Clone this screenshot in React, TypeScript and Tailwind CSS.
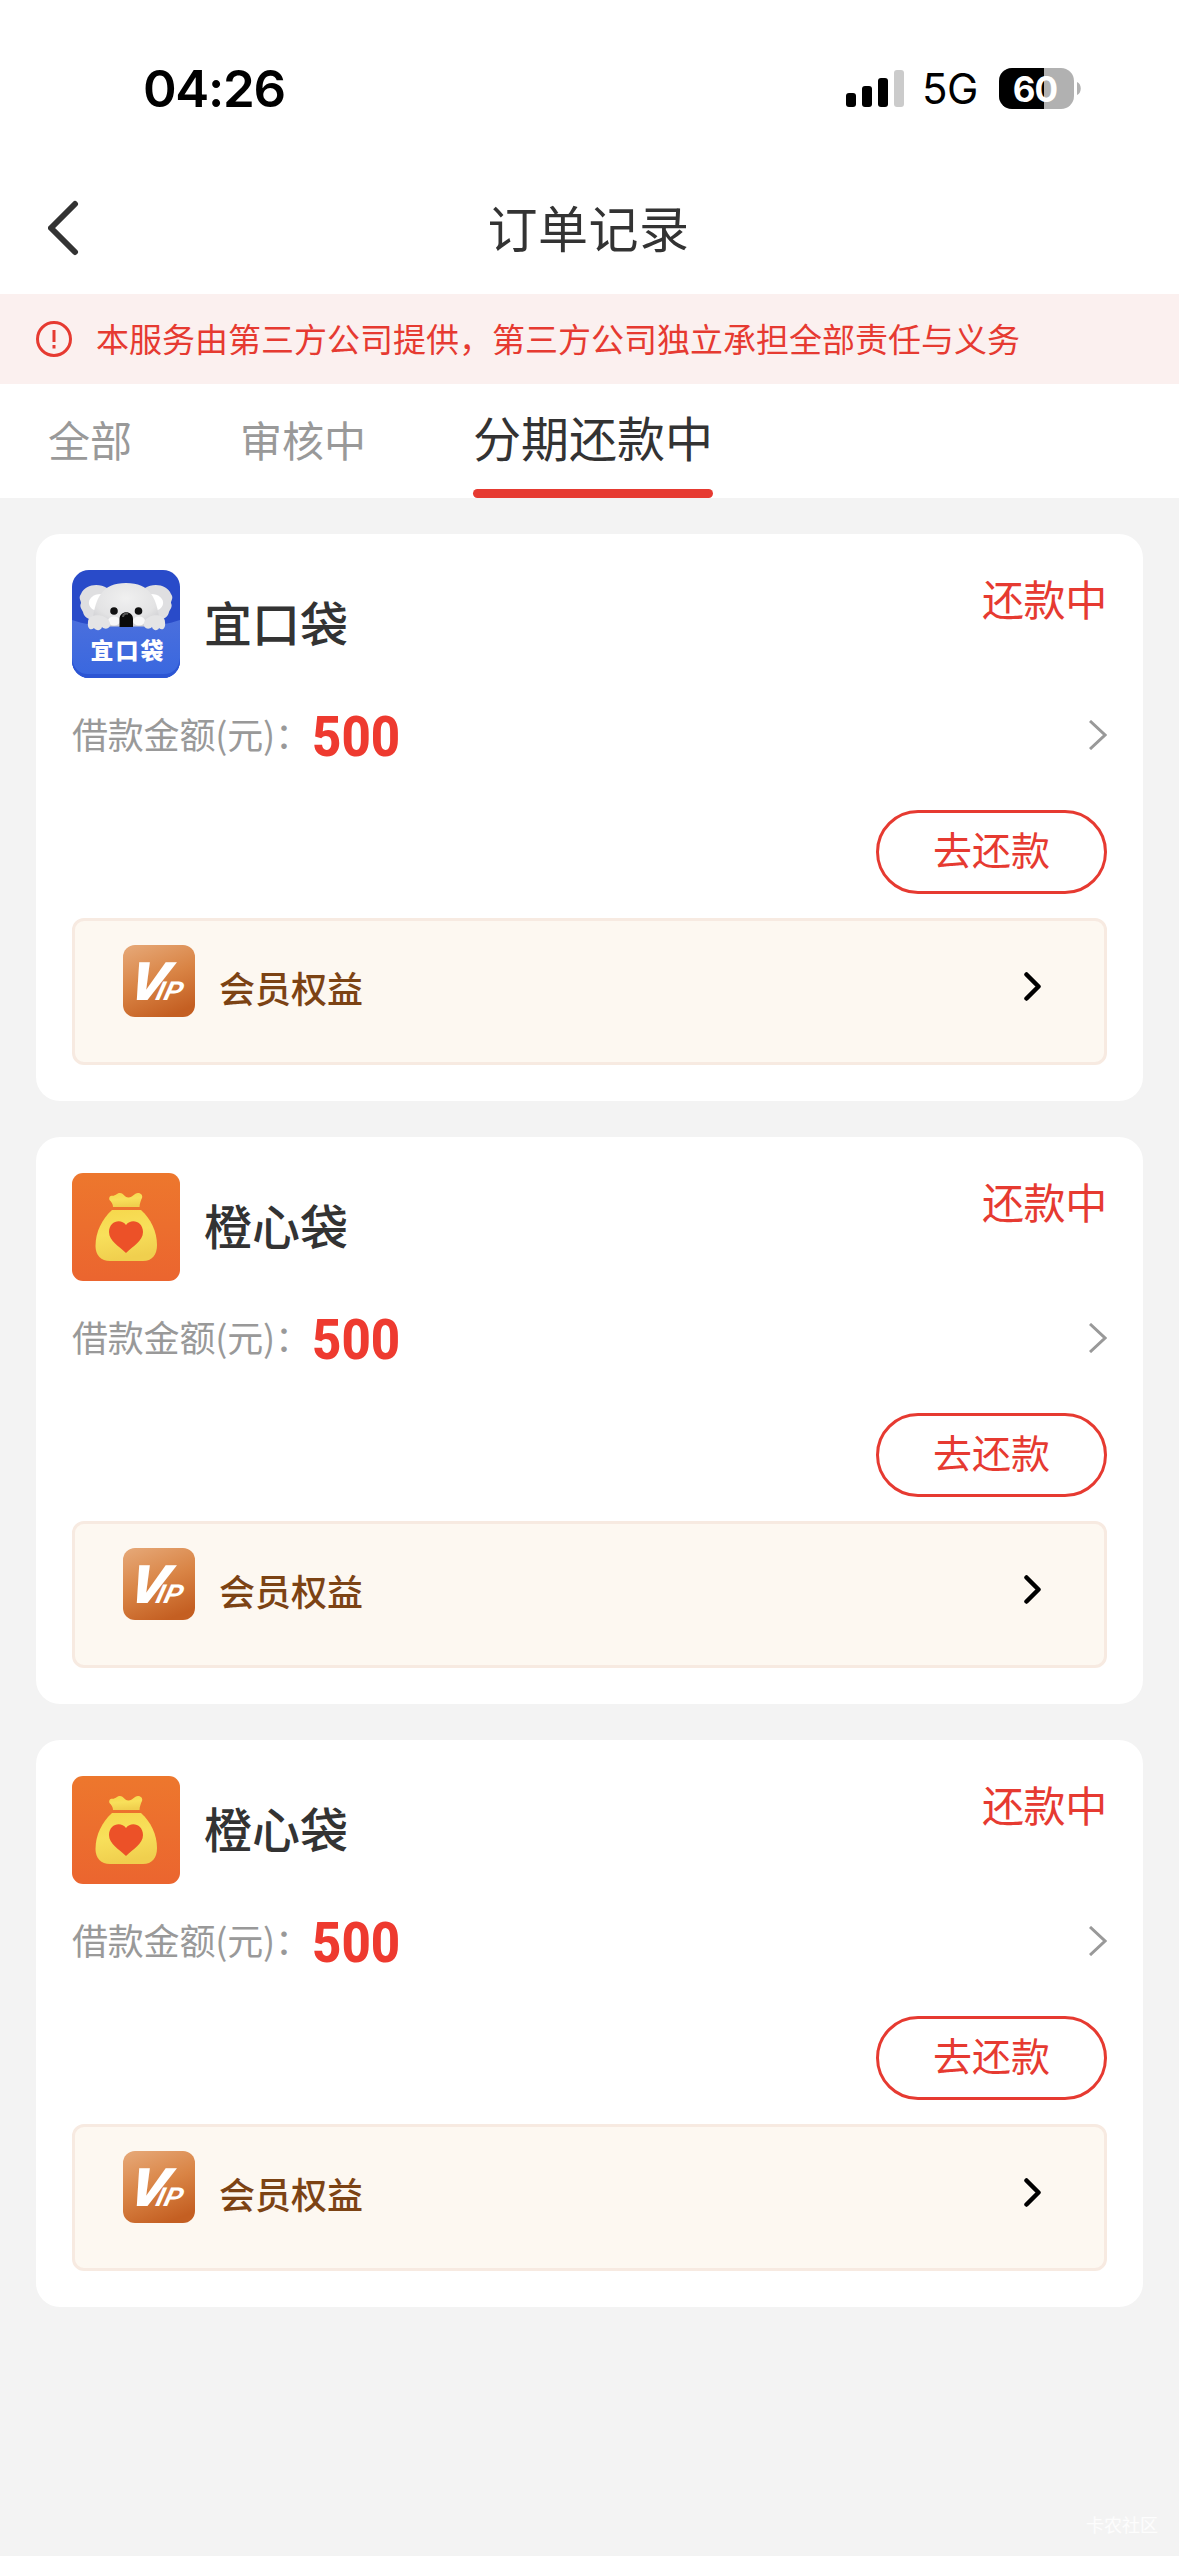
import React from 'react';

type Brand = 'koala' | 'bag';

interface Order {
  id: number;
  name: string;
  brand: Brand;
  status: string;
  amount: number;
}

const TABS = ['全部', '审核中', '分期还款中'];

const ORDERS: Order[] = [
  { id: 1, name: '宜口袋', brand: 'koala', status: '还款中', amount: 500 },
  { id: 2, name: '橙心袋', brand: 'bag', status: '还款中', amount: 500 },
  { id: 3, name: '橙心袋', brand: 'bag', status: '还款中', amount: 500 },
];

const StatusBar = () => (
  <div className="flex h-44 items-center justify-between pl-[143px] pr-[97px] font-['Inter',sans-serif] text-black">
    <span className="text-[51px] font-semibold leading-none tracking-[-1.3px]">04:26</span>
    <div className="flex items-center">
      <svg width="58" height="37" viewBox="0 0 58 37">
        <rect x="0" y="23" width="10" height="14" rx="3" />
        <rect x="16" y="16" width="10" height="21" rx="3" />
        <rect x="32" y="8" width="10" height="29" rx="3" />
        <rect x="48" y="0" width="10" height="37" rx="3" fill="#cbcbcb" />
      </svg>
      <span className="ml-[18px] w-[77px] pt-0.5 text-[42px] leading-none tracking-[-0.5px]">5G</span>
      <svg width="83" height="41" viewBox="0 0 83 41" className="overflow-visible">
        <defs>
          <clipPath id="battery">
            <rect width="75" height="41" rx="13" />
          </clipPath>
        </defs>
        <g clipPath="url(#battery)">
          <rect width="75" height="41" fill="#b1b1b1" />
          <rect width="45" height="41" fill="#000" />
        </g>
        <path d="M78 14c5 2 5 11 0 13z" fill="#b1b1b1" />
        <text x="36" y="33.500" textAnchor="middle" fontSize="35" fontWeight="700" fill="#fff" letterSpacing="-1">60</text>
      </svg>
    </div>
  </div>
);

const KoalaLogo = () => (
  <svg width="108" height="108" viewBox="0 0 108 108">
    <defs>
      <clipPath id="koalaClip">
        <rect width="108" height="108" rx="17" />
      </clipPath>
      <radialGradient id="fur" cx="50%" cy="35%" r="65%">
        <stop offset="0" stopColor="#f0f0f0" />
        <stop offset="0.7" stopColor="#e3e3e4" />
        <stop offset="1" stopColor="#d0d0d3" />
      </radialGradient>
      <linearGradient id="pocket" x1="0" y1="0" x2="0" y2="1">
        <stop offset="0" stopColor="#4a6fdd" />
        <stop offset="1" stopColor="#3967df" />
      </linearGradient>
    </defs>
    <g clipPath="url(#koalaClip)">
      <rect width="108" height="108" fill="#294bc9" />
      {/* ears */}
      <path d="M35 18C27 13 13 14 9 24c-3 4 0 6 0 9-2 4 1 6 2 9 1 5 5 7 9 8l18 3z" fill="#dfdfe1" />
      <path d="M73 18c8-5 22-4 26 6 3 4 0 6 0 9 2 4-1 6-2 9-1 5-5 7-9 8l-18 3z" fill="#dfdfe1" />
      <path d="M29 24c-8 0-13 5-12 10 1 4 4 6 8 7z" fill="#fff" />
      <path d="M79 24c8 0 13 5 12 10-1 4-4 6-8 7z" fill="#fff" />
      {/* head */}
      <path d="M20 57C22 28 30 13 54 13s32 15 34 44z" fill="url(#fur)" />
      <ellipse cx="42" cy="51" rx="6" ry="4.500" fill="#f8f8f8" />
      <ellipse cx="67" cy="51" rx="6" ry="4.500" fill="#f8f8f8" />
      <circle cx="42" cy="41" r="3.800" fill="#111" />
      <circle cx="66.500" cy="41" r="3.800" fill="#111" />
      <path d="M0 50c12 4 24 6 36 6.500h36c12-.5 24-2.500 36-6.500v58H0z" fill="url(#pocket)" />
      <path d="M47.500 57V49c0-9 13.500-9 13.500 0v8z" fill="#0a0a0a" />
      <path d="M51 47c0-3 3-4 5-3" stroke="#555" strokeWidth="2" fill="none" />
      {/* paws */}
      <path d="M16 52c0-9 19-9 22 1 1 6-5 7-8 4-1 4-6 4-8 1-3 3-7 1-6-6z" fill="#e4e4e5" />
      <path d="M93 52c0-9-18-9-21 1-1 6 5 7 8 4 1 4 6 4 7 1 3 3 7 1 6-6z" fill="#e4e4e5" />
      <path d="M0 88c1 10 7 16 16 16h76c9 0 15-6 16-16v20H0z" fill="#2c55d3" />
    </g>
    <text x="56" y="89" textAnchor="middle" fontSize="23" fontWeight="900" letterSpacing="2" fill="#fff">宜口袋</text>
  </svg>
);

const BagLogo = () => (
  <svg width="108" height="108" viewBox="0 0 108 108">
    <defs>
      <linearGradient id="bagBg" x1="0" y1="0" x2="0" y2="1">
        <stop offset="0" stopColor="#ed772d" />
        <stop offset="1" stopColor="#eb652f" />
      </linearGradient>
      <linearGradient id="bagBody" x1="0" y1="0" x2="0.2" y2="1">
        <stop offset="0" stopColor="#f6d74b" />
        <stop offset="0.5" stopColor="#f8e05b" />
        <stop offset="1" stopColor="#f0cf4e" />
      </linearGradient>
    </defs>
    <rect width="108" height="108" rx="11" fill="url(#bagBg)" />
    <path d="M37.500 27c-1-3 1-4.500 3-4.200 3 .2 4-2.800 7.500-2.800 4 0 4 4.500 8.500 4.500S62 20 66 20c3 0 5 2.500 4 5-1 2-2.500 6-2.500 9H41c0-3-1.500-5-3.500-7z" fill="url(#bagBody)" />
    <path d="M40 37h29C79 46 85 59 85 72c0 10-5 16-14 16H38c-9 0-14.500-6-14.500-15C23.500 59 30 46 40 37z" fill="url(#bagBody)" />
    <path d="M54 80C47 73 37 68 37 59c0-11 12-14 17-7 5-7 17-4 17 7 0 9-10 14-17 21z" fill="#ec5128" />
  </svg>
);

const VipIcon = () => (
  <svg width="72" height="72" viewBox="0 0 72 72" className="mb-auto">
    <defs>
      <linearGradient id="vipBg" x1="0.2" y1="0" x2="0.6" y2="1">
        <stop offset="0" stopColor="#e5a573" />
        <stop offset="0.5" stopColor="#d98445" />
        <stop offset="1" stopColor="#c45f22" />
      </linearGradient>
    </defs>
    <rect width="72" height="72" rx="12" fill="url(#vipBg)" />
    <text transform="translate(3 55) skewX(-14) scale(1.1 1)" fill="#fff" fontFamily="Roboto, sans-serif" fontWeight="900" fontStyle="italic" fontSize="53">
      V<tspan fontSize="26" fontWeight="700" dx="-8">IP</tspan>
    </text>
  </svg>
);

const OrderCard: React.FC<{ order: Order }> = ({ order }) => (
  <div className="flex h-[567px] flex-col rounded-3xl bg-white p-9">
    <div className="flex h-27 justify-between">
      <div className="flex items-center gap-6">
        {order.brand === 'koala' ? <KoalaLogo /> : <BagLogo />}
        <h2 className="pb-1.5 text-5xl font-medium leading-none text-[#333]">{order.name}</h2>
      </div>
      <span className="pt-[7px] text-[42px] leading-none tracking-[-0.3px] text-[#e63a31]">{order.status}</span>
    </div>

    <div className="mt-[29px] flex h-14 items-center">
      <span className="w-60 whitespace-nowrap pb-1 text-4xl leading-none tracking-[-0.2px] text-[#999]">借款金额(元)：</span>
      <span className="origin-left scale-x-[0.91] pt-1 font-['Roboto',sans-serif] text-[56px] font-extrabold leading-none text-[#ee3a2f]">
        {order.amount}
      </span>
      <svg width="18" height="30" viewBox="0 0 18 30" className="ml-auto" fill="none" stroke="#999" strokeWidth="3">
        <path d="M1 1l15 14L1 29" />
      </svg>
    </div>

    <button className="ml-auto mt-[47px] h-21 w-[231px] shrink-0 rounded-full border-3 border-[#e63a31] pb-2 text-[39px] leading-none text-[#e63a31]">
      去还款
    </button>

    <div className="mt-6 flex h-[147px] items-center rounded-xl border-3 border-[#f7eae1] bg-[#fdf8f1] pl-12 pr-[63px] pt-6">
      <VipIcon />
      <span className="mb-[34px] ml-6 text-4xl font-medium leading-none text-[#7c4314]">会员权益</span>
      <svg width="17" height="29" viewBox="0 0 17 29" className="mb-[35px] ml-auto" fill="none" stroke="#000" strokeWidth="4.500" strokeLinecap="round" strokeLinejoin="round">
        <path d="M2.500 2.500l12 12-12 12" />
      </svg>
    </div>
  </div>
);

export default function App() {
  return (
    <div className="relative flex h-[2556px] w-[1179px] flex-col overflow-hidden bg-[#f3f3f3] font-['Noto_Sans_CJK_SC',sans-serif]">
      <header className="bg-white">
        <StatusBar />
        <div className="grid h-[118px] grid-cols-3 items-center px-12 pb-[18px]">
          <svg width="31" height="56" viewBox="0 0 31 56" fill="none" stroke="#333" strokeWidth="6" strokeLinecap="round" strokeLinejoin="round" className="mt-1">
            <path d="M27 4L3 28l24 24" />
          </svg>
          <h1 className="pr-0.5 text-center text-[50px] leading-none tracking-[0.5px] text-[#333]">订单记录</h1>
        </div>
      </header>

      <div className="flex h-[90px] items-center bg-[#fbf0ef] pl-9 text-[#e63a31]">
        <svg width="36" height="36" viewBox="0 0 36 36" fill="none" stroke="currentColor" strokeWidth="3">
          <circle cx="18" cy="18" r="16.500" />
          <path d="M18 9v12M18 24v3.500" />
        </svg>
        <p className="ml-6 pb-0.5 text-[33px] leading-none">本服务由第三方公司提供，第三方公司独立承担全部责任与义务</p>
      </div>

      <nav className="flex h-[114px] gap-27 bg-white pl-12">
        {TABS.map((tab, i) =>
          i === 2 ? (
            <div key={tab} className="-ml-px flex flex-col justify-between pt-7 text-5xl leading-none text-[#333]">
              {tab}
              <span className="h-[9px] rounded-full bg-[#e63a31]" />
            </div>
          ) : (
            <div key={tab} className="pt-[34px] text-[42px] leading-none text-[#999]">
              {tab}
            </div>
          )
        )}
      </nav>

      <main className="flex flex-col gap-9 p-9">
        {ORDERS.map((order) => (
          <OrderCard key={order.id} order={order} />
        ))}
      </main>

      <span className="absolute bottom-[23px] right-[21px] text-lg leading-none text-white/80">卡农社区</span>
    </div>
  );
}
